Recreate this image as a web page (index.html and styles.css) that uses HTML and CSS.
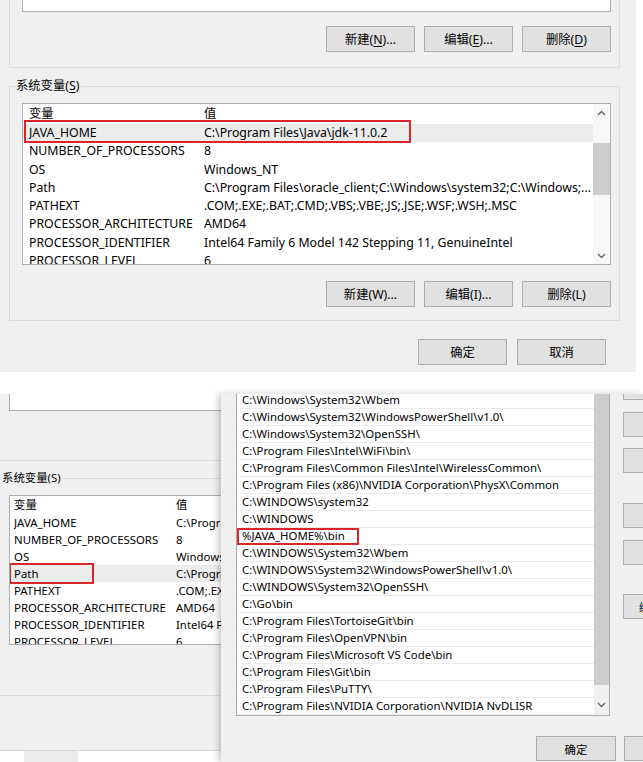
FILE: index.html
```html
<!DOCTYPE html>
<html lang="zh-CN">
<head>
  <meta charset="UTF-8" />
  <title>环境变量</title>
  <link rel="stylesheet" href="styles.css">
</head>
<body>
  <!-- first shot: environment variables dialog -->
  <div class="shot-top">
    <div class="env">
      <div class="group group-user">
        <div class="stub"></div>
        <div class="btn-row">
          <button class="btn">新建(<u>N</u>)...</button>
          <button class="btn">编辑(<u>E</u>)...</button>
          <button class="btn">删除(<u>D</u>)</button>
        </div>
      </div>

      <div class="group group-sys">
        <span class="group-label">系统变量(<u>S</u>)</span>
        <div class="vars">
          <div class="vars-main">
            <div class="vars-head"><span>变量</span><span>值</span></div>
            <div class="vars-row hot">
              <span>JAVA_HOME</span><span>C:\Program Files\Java\jdk-11.0.2</span>
              <div class="mark mark-java"></div>
            </div>
            <div class="vars-row"><span>NUMBER_OF_PROCESSORS</span><span>8</span></div>
            <div class="vars-row"><span>OS</span><span>Windows_NT</span></div>
            <div class="vars-row"><span>Path</span><span>C:\Program Files\oracle_client;C:\Windows\system32;C:\Windows;...</span></div>
            <div class="vars-row"><span>PATHEXT</span><span>.COM;.EXE;.BAT;.CMD;.VBS;.VBE;.JS;.JSE;.WSF;.WSH;.MSC</span></div>
            <div class="vars-row"><span>PROCESSOR_ARCHITECTURE</span><span>AMD64</span></div>
            <div class="vars-row"><span>PROCESSOR_IDENTIFIER</span><span>Intel64 Family 6 Model 142 Stepping 11, GenuineIntel</span></div>
            <div class="vars-row"><span>PROCESSOR_LEVEL</span><span>6</span></div>
          </div>
          <div class="scroll">
            <div class="arrow"><svg width="9" height="6" viewBox="0 0 9 6"><path d="M1 5L4.5 1.5L8 5" /></svg></div>
            <div class="thumb"></div>
            <div class="arrow arrow-down"><svg width="9" height="6" viewBox="0 0 9 6"><path d="M1 1L4.5 4.5L8 1" /></svg></div>
          </div>
        </div>
        <div class="btn-row">
          <button class="btn">新建(W)...</button>
          <button class="btn">编辑(I)...</button>
          <button class="btn">删除(L)</button>
        </div>
      </div>

      <div class="btn-row foot">
        <button class="btn">确定</button>
        <button class="btn">取消</button>
      </div>
    </div>
  </div>

  <!-- second shot: edit dialog over the same window -->
  <div class="shot-bottom">
    <div class="env-crop">
      <div class="crop-dlg">
        <div class="crop-user">
          <div class="crop-stub"></div>
        </div>
        <div class="crop-sys">
          <span class="group-label">系统变量(S)</span>
          <div class="vars vars-sm">
            <div class="vars-main">
              <div class="vars-head"><span>变量</span><span>值</span></div>
              <div class="vars-row"><span>JAVA_HOME</span><span>C:\Program Files\Java\jdk-11.0.2</span></div>
              <div class="vars-row"><span>NUMBER_OF_PROCESSORS</span><span>8</span></div>
              <div class="vars-row"><span>OS</span><span>Windows_NT</span></div>
              <div class="vars-row hot">
                <span>Path</span><span>C:\Program Files\oracle_client</span>
                <div class="mark mark-path"></div>
              </div>
              <div class="vars-row"><span>PATHEXT</span><span>.COM;.EXE;.BAT</span></div>
              <div class="vars-row"><span>PROCESSOR_ARCHITECTURE</span><span>AMD64</span></div>
              <div class="vars-row"><span>PROCESSOR_IDENTIFIER</span><span>Intel64 Family 6</span></div>
              <div class="vars-row"><span>PROCESSOR_LEVEL</span><span>6</span></div>
            </div>
          </div>
        </div>
      </div>
      <div class="ghost-btn"></div>
    </div>

    <div class="edit">
      <div class="edit-body">
        <div class="path-list">
          <div class="path-rows">
            <div class="path-row">C:\Windows\System32\Wbem</div>
            <div class="path-row">C:\Windows\System32\WindowsPowerShell\v1.0\</div>
            <div class="path-row">C:\Windows\System32\OpenSSH\</div>
            <div class="path-row">C:\Program Files\Intel\WiFi\bin\</div>
            <div class="path-row">C:\Program Files\Common Files\Intel\WirelessCommon\</div>
            <div class="path-row">C:\Program Files (x86)\NVIDIA Corporation\PhysX\Common</div>
            <div class="path-row">C:\WINDOWS\system32</div>
            <div class="path-row">C:\WINDOWS</div>
            <div class="path-row">%JAVA_HOME%\bin<div class="mark mark-bin"></div></div>
            <div class="path-row">C:\WINDOWS\System32\Wbem</div>
            <div class="path-row">C:\WINDOWS\System32\WindowsPowerShell\v1.0\</div>
            <div class="path-row">C:\WINDOWS\System32\OpenSSH\</div>
            <div class="path-row">C:\Go\bin</div>
            <div class="path-row">C:\Program Files\TortoiseGit\bin</div>
            <div class="path-row">C:\Program Files\OpenVPN\bin</div>
            <div class="path-row">C:\Program Files\Microsoft VS Code\bin</div>
            <div class="path-row">C:\Program Files\Git\bin</div>
            <div class="path-row">C:\Program Files\PuTTY\</div>
            <div class="path-row">C:\Program Files\NVIDIA Corporation\NVIDIA NvDLISR</div>
          </div>
          <div class="scroll scroll-sm">
            <div class="thumb"></div>
            <div class="arrow arrow-down"><svg width="9" height="6" viewBox="0 0 9 6"><path d="M1 1L4.5 4.5L8 1" /></svg></div>
          </div>
        </div>
        <div class="side">
          <button class="btn side-btn s1">编辑(E)...</button>
          <button class="btn side-btn s2">浏览(B)...</button>
          <button class="btn side-btn s3">删除(D)</button>
          <button class="btn side-btn s4">上移(U)</button>
          <button class="btn side-btn s5">下移(O)</button>
          <button class="btn side-btn s6">编辑文本(T)...</button>
        </div>
      </div>
      <div class="edit-foot">
        <button class="btn">确定</button>
        <button class="btn">取消</button>
      </div>
    </div>
  </div>
</body>
</html>
```

FILE: styles.css
```css
* {
  box-sizing:border-box;
}
body {
  margin:0;
  width:643px;
  height:762px;
  overflow:hidden;
  background:#fff;
  color:#000;
  font-family:"Noto Sans", "Noto Sans CJK SC", sans-serif;
  font-size:12.3px;
}
u {
  text-decoration-thickness:1px;
  text-underline-offset:2px;
}
.btn {
  height:26px;
  width:89px;
  padding:0;
  background:#e1e1e1;
  border:1px solid #adadad;
  color:#000;
  font:inherit;
  white-space:nowrap;
}
.btn-row {
  display:flex;
  justify-content:flex-end;
  gap:9px;
}

/* ---- top shot ---- */
.shot-top {
  height:372px;
  display:flex;
}
.env {
  width:636px;
  background:#f0f0f0;
  padding-left:9px;
  overflow:hidden;
}
.group {
  width:611px;
  border:1px solid #dcdcdc;
  padding:0 8px 0 12px;
}
.group-user {
  border-top:0;
  padding-bottom:15px;
}
.group-user .btn-row {
  margin-top:14px;
}
.stub {
  height:12px;
  background:#fff;
  border:1px solid #adadad;
  border-top:0;
}
.group-sys {
  margin-top:18px;
  border-top-width:1px;
  padding-bottom:13px;
}
.group-label {
  display:block;
  width:max-content;
  margin:-9px 0 0 -6px;
  padding-right:2px;
  line-height:16px;
  background:#f0f0f0;
}
.group-sys .btn-row {
  margin-top:16px;
}
.foot {
  width:611px;
  padding-right:14px;
  margin-top:18px;
  gap:10px;
}

.vars {
  display:flex;
  height:162px;
  margin-top:9px;
  background:#fff;
  border:1px solid #adadad;
  overflow:hidden;
}
.vars-main {
  flex:1;
  min-width:0;
}
.vars-head, .vars-row {
  position:relative;
  display:grid;
  grid-template-columns:175px 1fr;
  padding-left:6px;
  white-space:nowrap;
}
.vars-head {
  height:20px;
  line-height:20px;
}
.vars-row {
  height:18.3px;
  line-height:18.3px;
}
.vars-row span {
  overflow:hidden;
}
.vars-row.hot {
  background:#ececec;
}
.scroll {
  width:17px;
  background:#f7f7f7;
  display:flex;
  flex-direction:column;
}
.arrow {
  height:17px;
  display:flex;
  align-items:center;
  justify-content:center;
}
.arrow path {
  fill:none;
  stroke:#606060;
  stroke-width:1.3;
}
.thumb {
  height:52px;
  margin-top:22px;
  background:#cdcdcd;
}
.arrow-down {
  margin-top:auto;
}

/* red annotation boxes */
.mark {
  position:absolute;
  border:2px solid #d9262b;
}
.mark-java {
  left:1px;
  top:-4px;
  width:387px;
  height:23px;
}
.mark-path {
  left:-1px;
  top:-2px;
  width:85px;
  height:21px;
}
.mark-bin {
  left:-2px;
  top:0;
  width:122px;
  height:17px;
}

/* ---- bottom shot ---- */
.shot-bottom {
  display:flex;
  height:368px;
  margin-top:22px;
  font-size:11.4px;
}
.env-crop {
  width:221px;
  flex:none;
}
.crop-dlg {
  height:357px;
  background:#f0f0f0;
  border-bottom:1px solid #d8d8d8;
  overflow:hidden;
}
.crop-user {
  height:67px;
  border-bottom:1px solid #dcdcdc;
}
.crop-stub {
  height:17px;
  margin-left:9px;
  background:#fff;
  border-left:1px solid #adadad;
  border-bottom:1px solid #adadad;
}
.crop-sys {
  margin-top:17px;
  border-top:1px solid #dcdcdc;
  border-bottom:1px solid #dcdcdc;
  padding-bottom:50px;
}
.crop-sys .group-label {
  margin:-9px 0 0 2px;
}
.vars-sm {
  height:150px;
  margin:9px 0 0 9px;
  border-right:0;
}
.vars-sm .vars-head, .vars-sm .vars-row {
  grid-template-columns:162px 1fr;
  padding-left:4px;
}
.vars-sm .vars-head {
  height:18px;
  line-height:18px;
}
.vars-sm .vars-row {
  height:17px;
  line-height:17px;
}
.ghost-btn {
  width:54px;
  height:11px;
  margin-left:24px;
  background:#ebebeb;
}

.edit {
  position:relative;
  z-index:1;
  flex:1;
  background:#f0f0f0;
  box-shadow:-3px 0 6px rgba(0, 0, 0, .2);
  overflow:hidden;
}
.edit-body {
  display:flex;
  padding-left:15px;
  height:322px;
}
.path-list {
  display:flex;
  width:374px;
  flex:none;
  background:#fff;
  border:1px solid #adadad;
  border-top:0;
  overflow:hidden;
}
.path-rows {
  flex:1;
  margin-top:-2.5px;
  padding-left:2px;
}
.path-row {
  position:relative;
  height:17px;
  line-height:16px;
  padding-left:3px;
  border-bottom:1px solid #ececec;
  white-space:nowrap;
}
.scroll-sm {
  width:15px;
  background:#f0f0f0;
}
.scroll-sm .thumb {
  height:291px;
  margin-top:0;
}
.scroll-sm .arrow {
  height:14px;
  margin-bottom:3px;
}
.side {
  display:flex;
  flex-direction:column;
  margin-left:13px;
}
.side-btn {
  width:100px;
  height:25px;
  flex:none;
}
.s1 { margin-top:-19px; }
.s2 { margin-top:12px; }
.s3 { margin-top:11px; }
.s4 { margin-top:30px; }
.s5 { margin-top:12px; }
.s6 { margin-top:29px; }
.edit-foot {
  display:flex;
  gap:8px;
  padding-left:315px;
  margin-top:20px;
}
.edit-foot .btn {
  width:80px;
  height:25px;
  flex:none;
}
```
